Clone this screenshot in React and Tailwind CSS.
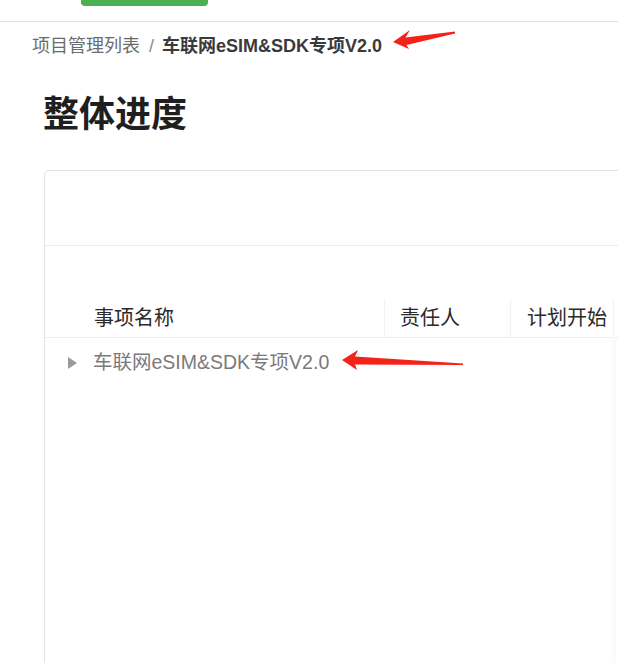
const FONT = 'font-["Liberation_Sans","Noto_Sans_CJK_SC",sans-serif]';

function Caret() {
  return (
    <svg width="9" height="12" viewBox="0 0 9 12" className="shrink-0">
      <path d="M0 0 L9 6 L0 12 Z" fill="#9a9a9a" />
    </svg>
  );
}

// red annotation arrows drawn over the screenshot
function Arrows() {
  return (
    <svg className="pointer-events-none absolute inset-0" width="618" height="663">
      <polygon
        points="393,42 410,30 405.5,37.5 455,31.5 455,33.5 406.5,45 409,49"
        fill="#f5221a"
      />
      <polygon
        points="342,360 358,350 355,356.5 463,363.5 463,365 355,364.5 357,370"
        fill="#f5221a"
      />
    </svg>
  );
}

export default function App() {
  return (
    <div className={`relative h-[663px] w-[618px] overflow-hidden bg-white ${FONT}`}>
      {/* top bar */}
      <div className="h-[22px] border-b border-[#e2e2e2]">
        <div className="ml-[81px] h-[6px] w-[127px] rounded-b-[4px] bg-[#4caf50]" />
      </div>

      {/* breadcrumb */}
      <div className="flex h-[48px] items-center pl-[32px] text-[18px] leading-none">
        <span className="text-[#6b6b6b]">项目管理列表</span>
        <span className="ml-[9px] mr-[8px] text-[#8a8a8a]">/</span>
        <span className="text-[18px] font-bold text-[#3a3a3a]">车联网eSIM&amp;SDK专项V2.0</span>
      </div>

      {/* title */}
      <h1 className="ml-[43px] mt-[20px] text-[36px] font-bold leading-[50px] text-[#1f1f1f]">
        整体进度
      </h1>

      {/* card */}
      <div className="relative ml-[44px] mt-[30px] h-[520px] w-[620px] rounded-[5px] border border-[#e3e3e3]">
        <div className="h-[75px] border-b border-[#ececec]" />

        <div className="mt-[50px] flex h-[42px] border-b border-[#ececec] pt-[3px] text-[20px] text-[#2a2a2a]">
          <div className="flex w-[340px] items-center border-r border-[#f0f0f0] pl-[49px]">事项名称</div>
          <div className="flex w-[126px] items-center border-r border-[#f0f0f0] pl-[15px]">责任人</div>
          <div className="flex w-[103px] items-center border-r border-[#f2f2f2] pl-[16px]">计划开始</div>
        </div>

        <div className="flex h-[50px] items-center pl-[23px] text-[19.5px] text-[#7a7a7a]">
          <Caret />
          <span className="ml-[16px]">车联网eSIM&amp;SDK专项V2.0</span>
        </div>

        {/* fixed column shadow */}
        <div className="absolute bottom-0 left-[563px] top-[166px] w-[8px] bg-gradient-to-r from-transparent to-[#f9f9f9]" />
      </div>

      <Arrows />
    </div>
  );
}
